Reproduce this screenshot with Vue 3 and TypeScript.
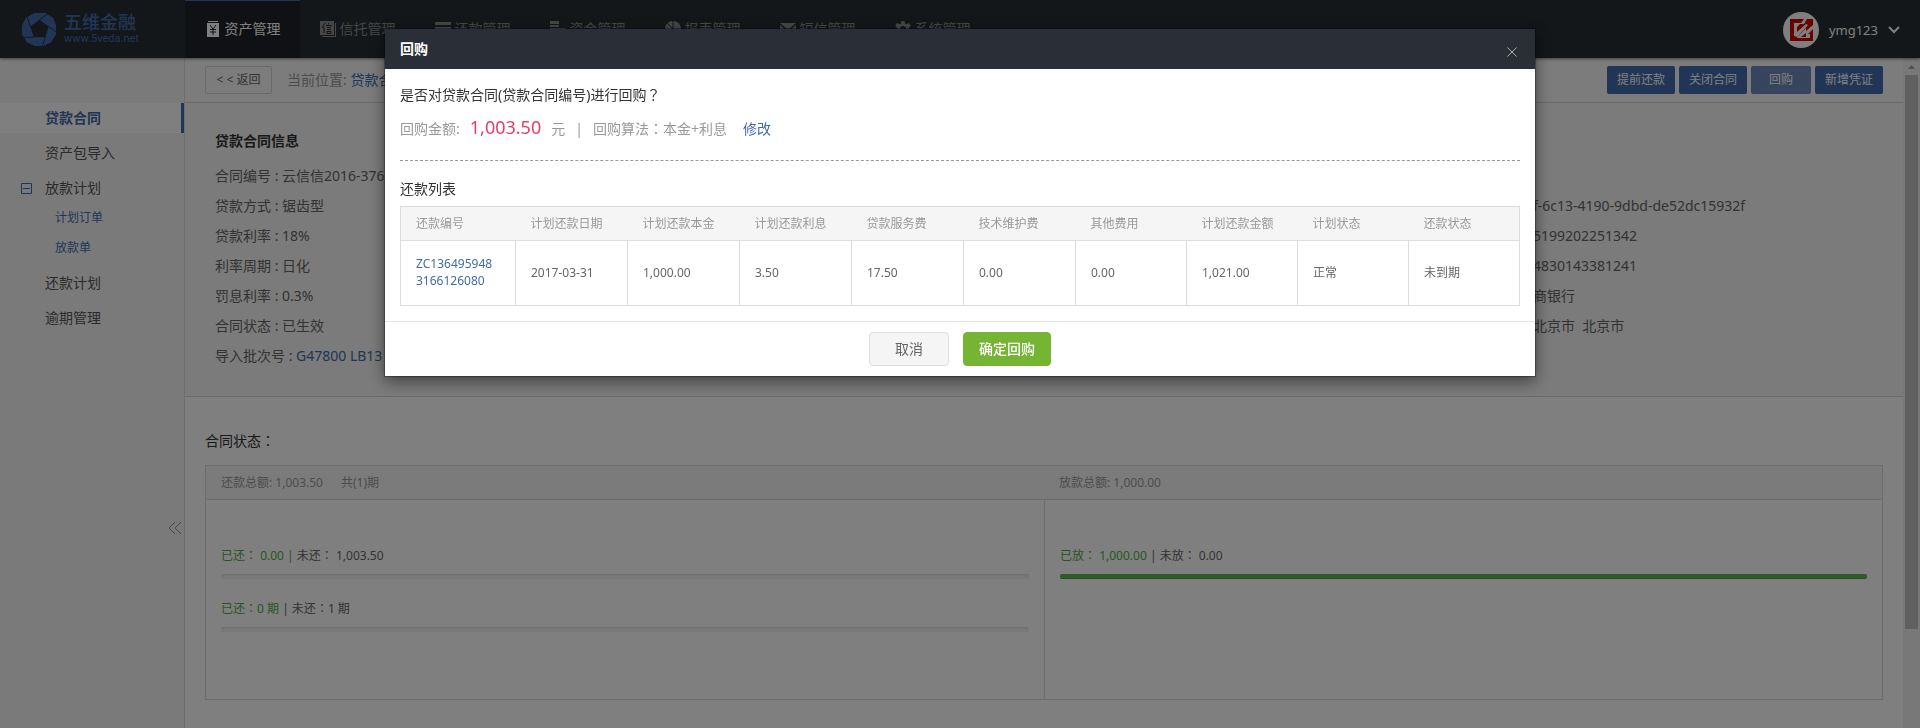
<script setup lang="ts">
interface NavItem { label: string; icon: string; active?: boolean }
interface Field { label: string; value: string; link?: boolean }
interface Progress { done: string; doneLabel: string; rest: string; restLabel: string; percent: number; greenBar?: boolean }

const nav: NavItem[] = [
  { label: '资产管理', icon: 'asset', active: true },
  { label: '信托管理', icon: 'trust' },
  { label: '还款管理', icon: 'repay' },
  { label: '资金管理', icon: 'fund' },
  { label: '报表管理', icon: 'report' },
  { label: '短信管理', icon: 'sms' },
  { label: '系统管理', icon: 'system' },
]

const fields: Field[] = [
  { label: '合同编号', value: '云信信2016-376' },
  { label: '贷款方式', value: '锯齿型' },
  { label: '贷款利率', value: '18%' },
  { label: '利率周期', value: '日化' },
  { label: '罚息利率', value: '0.3%' },
  { label: '合同状态', value: '已生效' },
  { label: '导入批次号', value: 'G47800 LB13', link: true },
]

const partyValues: string[] = [
  'f-6c13-4190-9dbd-de52dc15932f',
  '5199202251342',
  '4830143381241',
  '商银行',
  '北京市\u00a0\u00a0北京市',
]

const repaid: Progress[] = [
  { doneLabel: '已还', done: ' 0.00 ', restLabel: '未还', rest: ' 1,003.50', percent: 0, greenBar: true },
  { doneLabel: '已还', done: '0 期', restLabel: '未还', rest: '1 期', percent: 0 },
]
const lent: Progress[] = [
  { doneLabel: '已放', done: ' 1,000.00', restLabel: '未放', rest: ' 0.00', percent: 100 },
]

const columns: string[] = [
  '还款编号', '计划还款日期', '计划还款本金', '计划还款利息', '贷款服务费',
  '技术维护费', '其他费用', '计划还款金额', '计划状态', '还款状态',
]
const cells: string[] = ['2017-03-31', '1,000.00', '3.50', '17.50', '0.00', '0.00', '1,021.00', '正常', '未到期']
</script>

<template>
  <div class="page">
    <header class="topbar">
      <a href="#" class="brand">
        <svg class="brand-mark" viewBox="0 0 36 36" aria-hidden="true">
          <path fill-rule="evenodd" d="M13 1h11l8 5 3 8v9l-5 8-8 4h-9l-8-4-5-8v-9l4-8zM18 8L8.500 15 12 26h12l3.500-11z" />
          <path class="seam" d="M18 8L27 1.500M27.500 15L35 20.500M24 26L21 35M12 26H2M8.500 15L5.500 5.500" />
        </svg>
        <span class="brand-text">
          <strong class="brand-name">五维金融</strong>
          <span class="brand-url">www.5veda.net</span>
        </span>
      </a>
      <nav class="nav">
        <a v-for="item in nav" :key="item.label" href="#" class="nav-item" :class="{ active: item.active }">
          <svg v-if="item.icon === 'asset'" class="nav-icon" viewBox="0 0 16 16" aria-hidden="true">
            <path d="M3 0h10v1H3zM2 2h12v14H2z" />
            <path class="cut" d="M5 4l3 4 3-4M5 8.500h6M5 11h6M8 8v6" />
          </svg>
          <svg v-else-if="item.icon === 'trust'" class="nav-icon" viewBox="0 0 16 16" aria-hidden="true">
            <path d="M0 0h14v14H0zM15 2h1v14H2v-1h13z" />
            <path class="cut" d="M5 2L2 7M4 6v6M8.500 2v1.500M6 4.500h6M7 6.500h4M7 8.500h4M7 10.500h4v2H7z" />
          </svg>
          <svg v-else-if="item.icon === 'repay'" class="nav-icon" viewBox="0 0 16 16" aria-hidden="true">
            <path d="M0 1h16v3H0zM0 6h16v3H0zM0 11h16v3H0z" />
          </svg>
          <svg v-else-if="item.icon === 'fund'" class="nav-icon" viewBox="0 0 16 16" aria-hidden="true">
            <path d="M0 0h9v3H0zM0 4h9v2H0zM0 7h16v3H0zM0 12h12v3H0z" />
          </svg>
          <svg v-else-if="item.icon === 'report'" class="nav-icon" viewBox="0 0 16 16" aria-hidden="true">
            <circle cx="8" cy="8" r="8" />
            <path class="cut" d="M8 0v8l-6-6M8 8l5 6" />
          </svg>
          <svg v-else-if="item.icon === 'sms'" class="nav-icon" viewBox="0 0 16 16" aria-hidden="true">
            <path d="M0 2h16L8 9zM0 4l8 7 8-7v10H0z" />
          </svg>
          <svg v-else class="nav-icon" viewBox="0 0 16 16" aria-hidden="true">
            <path fill-rule="evenodd" d="M6.500 0h3l.5 2.500 1.500.8L14 2l1.800 2.800L14 6.500v3l2 1.700-2 3-2.500-1-1.500.8-.5 2h-3L6 14l-1.500-.8-2.500 1-2-3 2-1.700v-3L.2 4.800 2 2l2.500 1.300L6 2.500zM8 5a3 3 0 100 6 3 3 0 000-6z" />
          </svg>
          <span>{{ item.label }}</span>
        </a>
      </nav>
      <button type="button" class="user">
        <svg class="avatar" viewBox="0 0 36 36" aria-hidden="true">
          <circle cx="18" cy="18" r="18" fill="#fff" />
          <path fill="#d00000" d="M7 7h23v22H7z" />
          <path fill="#fff" d="M11 24V11h7l3-4h3l-3 5h-4l-3 3v5l9-8 2 1-11 12z" />
          <path fill="#fff" d="M14 25l9-9v3l7-6v4l-5 5h5v4H14z" />
          <path fill="#d00000" d="M18 25l5-4v4zM27 20h3v9h-3z" />
        </svg>
        <span>ymg123</span>
        <svg class="chevron" viewBox="0 0 12 8" aria-hidden="true"><path d="M1 1l5 5 5-5" /></svg>
      </button>
    </header>

    <div class="body">
      <aside class="sidebar">
        <ul class="menu">
          <li><a href="#" class="menu-link active">贷款合同</a></li>
          <li><a href="#" class="menu-link">资产包导入</a></li>
          <li>
            <a href="#" class="menu-link">
              <svg class="toggle" viewBox="0 0 11 11" aria-hidden="true"><path d="M.5.5h10v10H.5zM2 5.500h7" /></svg>
              放款计划
            </a>
            <ul class="submenu">
              <li><a href="#" class="sub-link">计划订单</a></li>
              <li><a href="#" class="sub-link">放款单</a></li>
            </ul>
          </li>
          <li><a href="#" class="menu-link">还款计划</a></li>
          <li><a href="#" class="menu-link">逾期管理</a></li>
        </ul>
        <button type="button" class="collapse" aria-label="收起">
          <svg viewBox="0 0 14 14" aria-hidden="true"><path d="M7 1L1 7l6 6M13 1L7 7l6 6" /></svg>
        </button>
      </aside>

      <main class="content">
        <div class="toolbar">
          <button type="button" class="back">&lt; &lt; 返回</button>
          <span class="crumb">当前位置: <a href="#">贷款合同</a></span>
          <div class="actions">
            <button type="button" class="action">提前还款</button>
            <button type="button" class="action">关闭合同</button>
            <button type="button" class="action pressed">回购</button>
            <button type="button" class="action">新增凭证</button>
          </div>
        </div>

        <section class="info">
          <div>
            <h2 class="info-title">贷款合同信息</h2>
            <ul class="rows">
              <li v-for="f in fields" :key="f.label">
                {{ f.label }} : <a v-if="f.link" href="#">{{ f.value }}</a><template v-else>{{ f.value }}</template>
              </li>
            </ul>
          </div>
          <ul class="rows party">
            <li v-for="v in partyValues" :key="v">{{ v }}</li>
          </ul>
        </section>

        <section class="status">
          <h2 class="status-title">合同状态<span class="mark">：</span></h2>
          <div class="board">
            <div class="board-head">
              <span class="board-cell">还款总额: 1,003.50<span class="periods">共(1)期</span></span>
              <span class="board-cell">放款总额: 1,000.00</span>
            </div>
            <div class="board-body">
              <div v-for="(group, gi) in [repaid, lent]" :key="gi" class="board-cell">
                <div v-for="p in group" :key="p.done" class="progress">
                  <p class="progress-text">
                    <span class="green">{{ p.doneLabel }}<span class="mark">：</span>{{ p.done }}<template v-if="p.greenBar">|</template></span>
                    <template v-if="!p.greenBar"> |</template> {{ p.restLabel }}<span class="mark">：</span>{{ p.rest }}
                  </p>
                  <div class="track"><div class="fill" :style="{ width: p.percent + '%' }"></div></div>
                </div>
              </div>
            </div>
          </div>
        </section>
      </main>

      <div class="scrollbar" aria-hidden="true">
        <svg class="arrow" viewBox="0 0 17 17"><path d="M5 11l3.500-4 3.500 4z" /></svg>
        <div class="thumb"></div>
        <div class="rest"></div>
      </div>
    </div>

    <div class="backdrop">
      <div class="modal" role="dialog" aria-modal="true" aria-labelledby="dialog-title">
        <div class="modal-head">
          <h2 id="dialog-title">回购</h2>
          <button type="button" class="close" aria-label="关闭">
            <svg viewBox="0 0 10 10" aria-hidden="true"><path d="M.5.5l9 9M9.500.5l-9 9" /></svg>
          </button>
        </div>
        <div class="modal-body">
          <p class="question">是否对贷款合同(贷款合同编号)进行回购<span class="mark">？</span></p>
          <p class="summary">
            <span>回购金额:</span>
            <strong class="amount">1,003.50</strong>
            <span>元</span>
            <span>|</span>
            <span>回购算法<span class="mark">：</span>本金+利息</span>
            <a href="#" class="edit">修改</a>
          </p>
          <h3 class="list-title">还款列表</h3>
          <table class="list">
            <colgroup><col class="first"><col class="wide" span="5"></colgroup>
            <thead>
              <tr><th v-for="c in columns" :key="c" scope="col">{{ c }}</th></tr>
            </thead>
            <tbody>
              <tr>
                <td><a href="#">ZC136495948<br>3166126080</a></td>
                <td v-for="(c, i) in cells" :key="i">{{ c }}</td>
              </tr>
            </tbody>
          </table>
        </div>
        <div class="modal-foot">
          <button type="button" class="btn">取消</button>
          <button type="button" class="btn confirm">确定回购</button>
        </div>
      </div>
    </div>
  </div>
</template>

<style>
body {
  margin: 0;
  overflow: hidden;
}
</style>

<style scoped>
.page {
  display: flex;
  flex-direction: column;
  height: 100vh;
  overflow: hidden;
  font: 14px/20px "Noto Sans", "Noto Sans CJK SC", sans-serif;
  color: #666;
  background: #fff;
}
.page *, .page *::before { box-sizing: border-box; }
ul { margin: 0; padding: 0; list-style: none; }
p, h2, h3 { margin: 0; font-size: 14px; font-weight: 400; }
a { color: #436ba8; text-decoration: none; }
button { font: inherit; cursor: pointer; margin: 0; }
/* The TC face centres full-width punctuation in its em box. */
.mark { font-family: "Noto Sans CJK TC", sans-serif; line-height: 1; }

.topbar {
  position: relative;
  z-index: 1;
  flex: none;
  display: flex;
  height: 58px;
  background: #282e32;
  box-shadow: 0 1px 3px rgba(0, 0, 0, 0.5);
}
.brand {
  display: flex;
  align-items: center;
  gap: 7px;
  width: 185px;
  padding-left: 22px;
  color: #426cac;
}
.brand-mark { width: 35px; height: 35px; fill: #426cac; }
.seam { fill: none; stroke: #282e32; stroke-width: 1; }
.brand-text { display: flex; flex-direction: column; }
.brand-name { font-size: 18px; line-height: 20px; font-weight: 500; }
.brand-url { font: 11px/14px Roboto, sans-serif; }
.nav { display: flex; flex: 1; }
.nav-item {
  display: flex;
  align-items: center;
  justify-content: center;
  gap: 4px;
  width: 115px;
  padding-bottom: 2px;
  border-top: 1px solid transparent;
  color: #8c8c8c;
  white-space: nowrap;
}
.nav-item.active { color: #fff; background: #202228; border-top-color: #426cac; }
.nav-icon { width: 16px; height: 16px; fill: currentColor; }
.cut { fill: none; stroke: #24282d; stroke-width: 1; }
.user {
  display: flex;
  align-items: center;
  gap: 10px;
  padding: 2px 20px 0 0;
  border: 0;
  background: none;
  color: #fff;
  font-size: 13px;
}
.avatar { width: 36px; height: 36px; }
.chevron { width: 12px; height: 8px; fill: none; stroke: #fff; stroke-width: 2; }

.body { flex: 1; display: flex; min-height: 0; }
.sidebar {
  flex: none;
  display: flex;
  flex-direction: column;
  width: 185px;
  padding-top: 45px;
  background: #f5f5f5;
  border-right: 1px solid #ddd;
}
.menu { display: flex; flex-direction: column; gap: 5px; }
.menu-link {
  display: flex;
  align-items: center;
  height: 30px;
  padding-left: 45px;
  color: #555;
}
.menu-link.active {
  background: #fff;
  border-right: 3px solid #426cac;
  color: #436ba8;
  font-weight: 700;
}
.toggle {
  width: 11px;
  height: 11px;
  margin: 0 13px 0 -24px;
  fill: none;
  stroke: #426cac;
}
.sub-link { display: block; padding-left: 55px; font-size: 12px; line-height: 30px; }
.collapse {
  align-self: flex-end;
  display: flex;
  margin: 188px 2px 0 0;
  padding: 0;
  border: 0;
  background: none;
}
.collapse svg { width: 14px; height: 14px; fill: none; stroke: #999; stroke-width: 1; }

.content { flex: 1; min-width: 0; overflow: hidden; }
.toolbar {
  display: flex;
  align-items: center;
  height: 45px;
  padding: 0 20px;
  background: #f8f8f8;
  border-bottom: 1px solid #d4d4d4;
}
.back {
  height: 28px;
  padding: 0 10px;
  border: 1px solid #d4d4d4;
  border-radius: 2px;
  background: #f8f8f8;
  color: #666;
  font-size: 12px;
  min-width: 67px;
}
.crumb { margin-left: 15px; color: #999; }
.actions { display: flex; gap: 4px; margin-left: auto; }
.action {
  min-width: 60px;
  height: 28px;
  padding: 0 10px;
  border: 0;
  border-radius: 2px;
  background: #426cac;
  color: #fff;
  font-size: 12px;
}
.action.pressed { background: #6c89bb; }

.info {
  display: grid;
  grid-template-columns: 1fr 340px;
  padding: 28px 30px 25px;
  background: #f6f6f6;
  border-bottom: 1px solid #d4d4d4;
}
.info-title { margin-bottom: 10px; color: #333; font-weight: 700; }
.rows { line-height: 30px; white-space: nowrap; }
.party { padding-top: 60px; }

.status { padding: 34px 20px 28px; }
.status-title { margin-bottom: 14px; color: #333; }
.board { border: 1px solid #d9d9d9; font-size: 12px; }
.board-head, .board-body { display: grid; grid-template-columns: 1fr 1fr; }
.board-head { line-height: 33px; background: #f6f6f6; border-bottom: 1px solid #d9d9d9; color: #999; }
.board-cell { padding: 0 15px; }
.periods { margin-left: 18px; }
.board-body { min-height: 199px; }
.board-body .board-cell { padding-top: 46px; }
.board-body .board-cell + .board-cell { border-left: 1px solid #d9d9d9; }
.progress { margin-bottom: 20px; }
.progress-text { font-size: 12px; margin-bottom: 8px; }
.green { color: #55a94d; }
.track {
  height: 5px;
  border-radius: 2px;
  background: #f2f2f2;
  box-shadow: inset 0 1px 2px rgba(0, 0, 0, 0.1);
  overflow: hidden;
}
.fill { height: 100%; background: #5eb552; box-shadow: inset 0 -1px 0 rgba(0, 0, 0, 0.15); }

.scrollbar { flex: none; display: flex; flex-direction: column; width: 17px; background: #f1f1f1; }
.arrow { flex: none; width: 17px; height: 17px; fill: #a3a3a3; }
.thumb { flex: 554; margin: 0 2px; background: #c1c1c1; }
.rest { flex: 99; }

.backdrop {
  position: fixed;
  inset: 0;
  z-index: 2;
  padding: 29px 20px;
  background: rgba(0, 0, 0, 0.5);
  overflow: auto;
}
.modal {
  max-width: 1150px;
  margin: 0 auto;
  background: #fff;
  box-shadow: 0 5px 15px rgba(0, 0, 0, 0.5), 0 0 1px 1px rgba(0, 0, 0, 0.3);
}
.modal-head {
  display: flex;
  align-items: center;
  justify-content: space-between;
  height: 40px;
  padding: 0 15px;
  background: #2a2e36;
}
.modal-head h2 { color: #fff; font-weight: 700; }
.close { display: flex; margin-top: 6px; padding: 3px; border: 0; background: none; }
.close svg { width: 10px; height: 10px; fill: none; stroke: #aaa; stroke-width: 1; }
.modal-body { padding: 15px; }
.question { color: #333; line-height: 22px; }
.summary {
  display: flex;
  align-items: baseline;
  gap: 10px;
  height: 55px;
  padding-top: 7px;
  border-bottom: 1px dashed #999;
  color: #999;
  line-height: 28px;
}
.amount { color: #e83e66; font-size: 18px; font-weight: 400; }
.edit { margin-left: 6px; }
.list-title { margin: 18px 0 7px; color: #333; }
.list { width: 100%; table-layout: fixed; border-collapse: collapse; font-size: 12px; line-height: 17px; }
.first { width: 115px; }
.wide { width: 112px; }
.list thead, .list tbody { border: 1px solid #ddd; }
.list th {
  height: 34px;
  padding: 0 15px;
  background: #f5f5f5;
  color: #999;
  font-weight: 400;
  text-align: left;
  white-space: nowrap;
}
.list td { height: 65px; padding: 0 15px 2px; border: 1px solid #ddd; }
.modal-foot {
  display: flex;
  justify-content: center;
  gap: 14px;
  padding: 10px 15px;
  border-top: 1px solid #e5e5e5;
}
.btn {
  min-width: 80px;
  height: 34px;
  padding: 0 15px;
  border: 1px solid #ddd;
  border-radius: 4px;
  background: #f5f5f5;
  color: #666;
}
.btn.confirm { background: #76b534; border-color: #76b534; color: #fff; font-weight: 500; }
</style>
